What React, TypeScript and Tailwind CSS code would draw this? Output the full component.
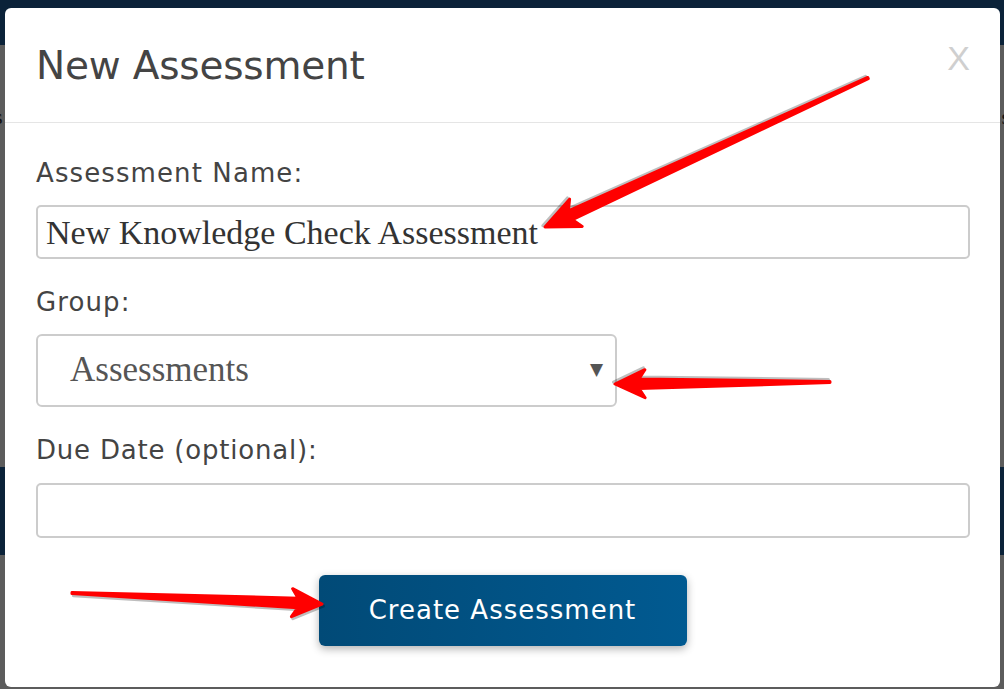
import React from 'react'

const sans = { fontFamily: '"DejaVu Sans", Verdana, sans-serif' }
const serif = { fontFamily: '"Liberation Serif", "Times New Roman", serif' }

function Arrow({ x1, y1, x2, y2, head = 32, wing = 15 }: { x1: number; y1: number; x2: number; y2: number; head?: number; wing?: number }) {
  const L = Math.hypot(x2 - x1, y2 - y1)
  const a = (Math.atan2(y2 - y1, x2 - x1) * 180) / Math.PI
  const pts = `0,-0.6 ${L - head + 6},-4.8 ${L - head},-${wing} ${L},0 ${L - head},${wing} ${L - head + 6},4.8 0,0.6`
  return (
    <g transform={`translate(${x1} ${y1}) rotate(${a})`}>
      <polygon points={pts} transform="translate(1.5 2)" fill="#000" opacity="0.25" stroke="#000" strokeWidth="3" strokeLinejoin="round" />
      <polygon points={pts} fill="#ff0000" stroke="#f00" strokeWidth="3" strokeLinejoin="round" />
    </g>
  )
}

export default function App() {
  return (
    <div className="relative w-[1004px] h-[689px] overflow-hidden bg-[#5c5c5c]">
      {/* page behind the backdrop */}
      <div className="flex flex-col h-full">
        <div className="h-[45px] bg-[#0b2239]" />
        <div className="h-[60px]" />
        <div className="flex justify-between text-[22px] leading-[24px] text-[#111]" style={serif}>
          <span className="-ml-[6px]">s</span>
          <span className="-mr-[6px]">s</span>
        </div>
        <div className="h-[338px]" />
        <div className="h-[88px] bg-[#0b2239]" />
      </div>

      {/* modal */}
      <div className="absolute left-[5px] top-[8px] w-[995px] h-[679px] bg-white rounded-[6px] flex flex-col" style={sans}>
        <div className="h-[115px] border-b border-[#e5e5e5] flex items-start justify-between pl-[31px] pr-[30px]">
          <h1 className="mt-[35px] text-[39px] leading-[46px] text-[#444] font-normal tracking-[-0.2px]">New Assessment</h1>
          <span className="mt-[30px] text-[34px] leading-[40px] text-[#cfcfcf]" style={{ fontFamily: '"Liberation Sans", Arial, sans-serif' }}>X</span>
        </div>

        <div className="flex flex-col pl-[31px] pr-[30px]">
          <label className="mt-[33px] h-[34px] text-[26px] leading-[34px] text-[#444] tracking-[1.1px]">Assessment Name:</label>
          <div className="mt-[15px] h-[54px] border-2 border-[#cccccc] rounded-[5px] flex items-center pl-[8px] text-[34px] text-[#333]" style={serif}>
            New Knowledge Check Assessment
          </div>

          <label className="mt-[26px] h-[34px] text-[26px] leading-[34px] text-[#444] tracking-[1.1px]">Group:</label>
          <div className="mt-[15px] w-[581px] h-[73px] border-2 border-[#cccccc] rounded-[6px] flex items-center justify-between pl-[32px] pr-[12px] text-[35px] text-[#555]" style={serif}>
            <span>Assessments</span>
            <span className="text-[17px] text-[#555] -mt-[2px]" style={{ fontFamily: '"DejaVu Sans", sans-serif' }}>▼</span>
          </div>

          <label className="mt-[26px] h-[34px] text-[26px] leading-[34px] text-[#444] tracking-[0.8px]">Due Date (optional):</label>
          <div className="mt-[16px] h-[55px] border-2 border-[#cccccc] rounded-[5px]" />

          <div className="mt-[37px] flex justify-center pr-[1px]">
            <button className="w-[368px] h-[71px] rounded-[6px] bg-gradient-to-r from-[#014a77] to-[#015a91] text-white text-[26px] tracking-[1px] shadow-[0_3px_8px_rgba(0,0,0,0.3)]">
              Create Assessment
            </button>
          </div>
        </div>
      </div>

      {/* annotation arrows */}
      <svg className="absolute left-0 top-0" width="1004" height="689">
        <Arrow x1={868} y1={78} x2={545} y2={227} head={34} wing={15} />
        <Arrow x1={830} y1={382} x2={615} y2={384} head={30} wing={14} />
        <Arrow x1={72} y1={593} x2={322} y2={604} head={30} wing={14} />
      </svg>
    </div>
  )
}
